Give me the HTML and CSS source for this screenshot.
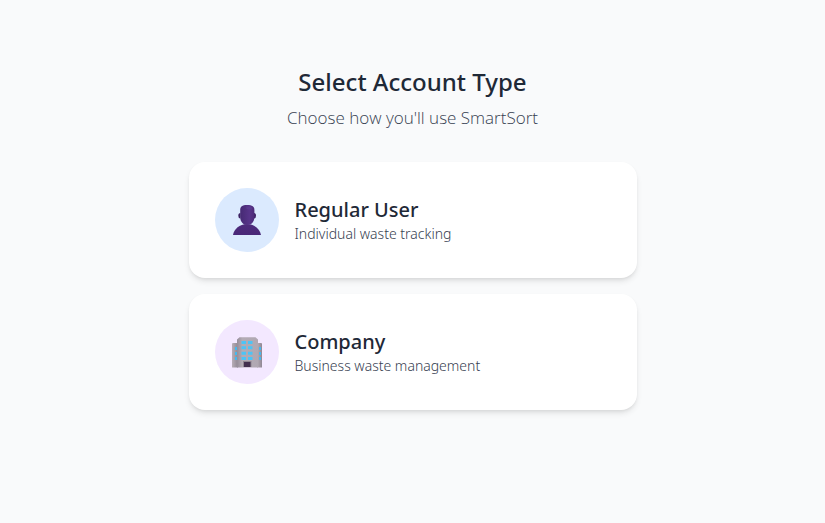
FILE: index.html
```html
<!DOCTYPE html>
<html lang="en">
<head>
<meta charset="utf-8">
<meta name="viewport" content="width=device-width, initial-scale=1">
<title>Select Account Type</title>
<link rel="stylesheet" href="styles.css">
</head>
<body>
<main class="page">
  <header class="intro">
    <h1 class="title">Select Account Type</h1>
    <p class="subtitle">Choose how you'll use SmartSort</p>
  </header>
  <div class="options">
    <button class="card" type="button">
      <span class="badge badge-user">
        <svg class="icon" viewBox="0 0 32 32" aria-hidden="true">
          <defs>
            <linearGradient id="head" x1="0" y1="0" x2="1" y2="0">
              <stop offset="0" stop-color="#462a74"/>
              <stop offset=".65" stop-color="#573489"/>
              <stop offset="1" stop-color="#4c2b78"/>
            </linearGradient>
            <linearGradient id="body" x1="0" y1="0" x2="0" y2="1">
              <stop offset="0" stop-color="#4e2c7c"/>
              <stop offset="1" stop-color="#482778"/>
            </linearGradient>
          </defs>
          <path fill="url(#body)" d="M2 31C3 25 8.500 20 16 20S29 25 30 31Z"/>
          <path fill="#3c2163" d="M9.500 9Q7.300 9 7.300 11.800T9.500 14.500ZM23 9Q25 9 25 11.800T23 14.500Z"/>
          <path fill="url(#head)" d="M9.200 6C9.200 2.500 11 1 16.200 1S23.400 2.500 23.400 6V12.500C23.400 18 20.500 21 16.300 21S9.200 18 9.200 12.500Z"/>
          <path fill="#65419b" opacity=".4" d="M15 2.500H19.500Q21.500 3 21.500 5.500H17Q15 5 15 2.500Z"/>
        </svg>
      </span>
      <span class="text">
        <span class="name">Regular User</span>
        <span class="detail">Individual waste tracking</span>
      </span>
    </button>
    <button class="card" type="button">
      <span class="badge badge-company">
        <svg class="icon" viewBox="0 0 32 32" aria-hidden="true">
          <defs>
            <linearGradient id="tower" x1="0" y1="0" x2="1" y2="0">
              <stop offset="0" stop-color="#968e99"/>
              <stop offset=".25" stop-color="#b3abb5"/>
              <stop offset="1" stop-color="#b0a8b2"/>
            </linearGradient>
            <linearGradient id="wing" x1="0" y1="0" x2="1" y2="0">
              <stop offset="0" stop-color="#b8afb8"/>
              <stop offset="1" stop-color="#8f8793"/>
            </linearGradient>
          </defs>
          <path fill="url(#wing)" d="M1 31.500V8Q1 7 2 7H7V31.500Z"/>
          <path fill="url(#wing)" d="M26 7H30Q31 7 31 8V31.500H26Z"/>
          <path fill="url(#tower)" d="M6 31.500V3.500L8.500 1.200H24.500L27 3.500V31.500Z"/>
          <path fill="#45b8ee" d="M4 11H6V14H4ZM4 16H6V19H4ZM4 21H6V24H4ZM28 11H30V14H28ZM28 16H30V19H28ZM28 21H30V24H28Z"/>
          <path fill="#4cc4f6" d="M10.500 5H15V8H10.500ZM17 5H21.500V8H17ZM10.500 10.300H15V13.300H10.500ZM17 10.300H21.500V13.300H17ZM10.500 15.700H15V18.700H10.500ZM17 15.700H21.500V18.700H17ZM10.500 21H15V24H10.500ZM17 21H21.500V24H17Z"/>
          <path fill="#8e8690" d="M12 25H20.500V31H12Z"/>
          <path fill="#43304f" d="M13 26H19.500V31H13Z"/>
        </svg>
      </span>
      <span class="text">
        <span class="name">Company</span>
        <span class="detail">Business waste management</span>
      </span>
    </button>
  </div>
</main>
</body>
</html>
```
FILE: styles.css
```css
* {
  box-sizing: border-box;
  margin: 0;
}

body {
  min-height: 100vh;
  background: #f9fafb;
  color: #1f2937;
  font-family: "Noto Sans", "Open Sans", sans-serif;
}

.page {
  max-width: 480px;
  margin: 0 auto;
  padding: 64px 16px;
}

.intro {
  margin-bottom: 32px;
  text-align: center;
}

.title {
  margin-bottom: 6px;
  font-size: 24px;
  font-weight: 500;
  line-height: 36px;
}

.subtitle {
  color: #374151;
  font-family: "Open Sans", "Noto Sans", sans-serif;
  font-size: 17px;
  font-weight: 300;
  line-height: 24px;
}

.options {
  display: grid;
  gap: 16px;
}

.card {
  display: flex;
  align-items: center;
  gap: 16px;
  width: 100%;
  padding: 26px;
  border: 0;
  border-radius: 16px;
  background: #fff;
  box-shadow: 0 4px 6px -1px rgb(0 0 0 / 10%), 0 2px 4px -2px rgb(0 0 0 / 10%);
  color: inherit;
  font: inherit;
  text-align: left;
  cursor: pointer;
}

.badge {
  display: grid;
  place-items: center;
  flex: none;
  width: 64px;
  height: 64px;
  border-radius: 50%;
}

.badge-user {
  background: #dbeafe;
}

.badge-company {
  background: #f3e8ff;
}

.icon {
  width: 32px;
  height: 32px;
}

.text {
  display: grid;
}

.name {
  font-size: 20px;
  font-weight: 500;
  line-height: 28px;
}

.detail {
  color: #374151;
  font-size: 14px;
  font-weight: 300;
  line-height: 20px;
}
```
